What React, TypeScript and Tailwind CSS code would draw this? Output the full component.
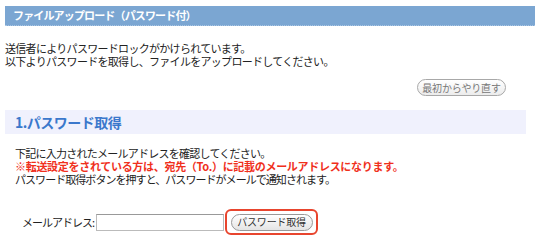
import React from "react";

export default function App() {
  const font = { fontFamily: '"Noto Sans CJK JP", "Noto Sans", sans-serif' };
  return (
    <div className="w-[540px] h-[241px] bg-white overflow-hidden text-[#222]" style={font}>
      <div className="pt-[6px] pl-[5px] pr-[5px]">
        <div className="h-[20px] bg-[#7ba6d2] border-b border-dotted border-[#a9c6e4] flex items-center pl-[8px]">
          <span className="text-white font-bold text-[11px] tracking-[-0.85px] leading-none whitespace-nowrap">ファイルアップロード（パスワード付）</span>
        </div>
        <div className="mt-[16px] text-[11px] leading-[13px] tracking-[-0.7px] whitespace-nowrap">
          <p>送信者によりパスワードロックがかけられています。</p>
          <p>以下よりパスワードを取得し、ファイルをアップロードしてください。</p>
        </div>
        <div className="mt-[11px] flex justify-end pr-[29px]">
          <button className="h-[17px] w-[89px] rounded-full border border-[#a8a8a8] bg-gradient-to-b from-white to-[#ececec] text-[10px] text-[#777] leading-none tracking-[-0.2px] flex items-center justify-center">
            最初からやり直す
          </button>
        </div>
        <div className="mt-[14px] w-[521px] h-[24px] bg-[#f0f1fd] flex items-center pl-[10px]">
          <span className="text-[14px] font-bold text-[#3b78cc] leading-none tracking-[-0.5px]">1.パスワード取得</span>
        </div>
        <div className="mt-[13px] pl-[10px] text-[11px] leading-[13px] tracking-[-0.75px] whitespace-nowrap">
          <p>下記に入力されたメールアドレスを確認してください。</p>
          <p className="text-[#f0301c] font-bold tracking-[-0.3px]">※転送設定をされている方は、宛先（To.）に記載のメールアドレスになります。</p>
          <p className="tracking-[-0.95px]">パスワード取得ボタンを押すと、パスワードがメールで通知されます。</p>
        </div>
        <div className="mt-[23px] flex items-center pl-[17px]">
          <span className="text-[11px] tracking-[-1px] whitespace-nowrap">メールアドレス:</span>
          <div className="ml-[2px] w-[128px] h-[17px] border border-[#bbb] border-t-[#999] bg-white" />
          <div className="ml-[1px] w-[93px] h-[26px] border-2 border-[#e8452e] rounded-[6px] flex items-center justify-center">
            <button className="h-[17px] w-[82px] rounded-full border border-[#999] bg-gradient-to-b from-white to-[#e4e4e4] text-[10px] text-[#333] leading-none tracking-[-0.2px] flex items-center justify-center whitespace-nowrap">
              パスワード取得
            </button>
          </div>
        </div>
      </div>
    </div>
  );
}
